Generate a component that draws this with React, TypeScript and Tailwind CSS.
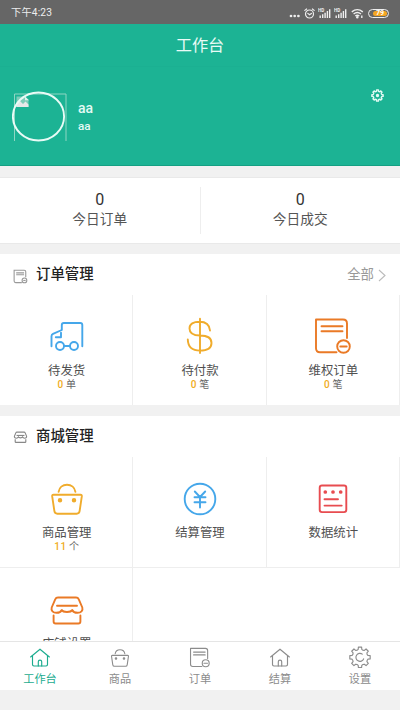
import type { ReactNode } from 'react';

type IconProps = { className?: string };

// outline of a cog with rounded teeth, centred on 12,12
function gearPath(teeth: number, outer: number, inner: number) {
  const step = (Math.PI * 2) / teeth;
  const pt = (r: number, a: number) => `${(12 + r * Math.sin(a)).toFixed(2)} ${(12 - r * Math.cos(a)).toFixed(2)}`;
  let d = '';
  for (let i = 0; i < teeth; i++) {
    const a = i * step;
    d += `${i === 0 ? 'M' : 'L'}${pt(outer, a - step * 0.2)}L${pt(outer, a + step * 0.2)}L${pt(inner, a + step * 0.28)}Q${pt(inner - 0.8, a + step * 0.5)} ${pt(inner, a + step * 0.72)}`;
  }
  return d + 'Z';
}

function BigIcon({ color, children }: { color: string; children: ReactNode }) {
  return (
    <svg className={`w-10 h-10 shrink-0 ${color}`} viewBox="0 0 40 40" fill="none" stroke="currentColor" strokeWidth="1.9" strokeLinecap="round" strokeLinejoin="round">
      {children}
    </svg>
  );
}

function DocShape() {
  return (
    <>
      <path d="M23.5 36.3H7Q3 36.3 3 32.3V3.5H30Q34 3.5 34 7.5V22" />
      <path d="M8.5 10.3H29.5M8.5 15.3H29.5" />
      <circle cx="30.5" cy="30.5" r="6.3" />
      <path d="M27.3 30.5H33.7" />
    </>
  );
}

function BagShape() {
  return (
    <>
      <path d="M6.5 16.7H33.5Q35 16.7 34.8 18.4L32.6 33.2Q32.2 35.7 29.7 35.7H10.3Q7.8 35.7 7.4 33.2L5.2 18.4Q5 16.7 6.5 16.7Z" />
      <path d="M11.6 13.8C12.2 9.7 15.6 6.8 20 6.8S27.8 9.7 28.4 13.8" />
      <circle cx="13" cy="22.2" r="1.3" fill="currentColor" />
      <circle cx="27" cy="22.2" r="1.3" fill="currentColor" />
    </>
  );
}

function ShopShape() {
  return (
    <>
      <path d="M11 8.5H29Q31 8.5 31.8 10.3L35.3 18.5C36.2 21.5 34 23.8 30.5 23.8C28 23.8 26 22.8 25.2 21C24 23.6 16 23.6 14.8 21C14 22.8 12 23.8 9.5 23.8C6 23.8 3.8 21.5 4.7 18.5L8.2 10.3Q9 8.5 11 8.5Z" />
      <path d="M10 16.8H30" />
      <path d="M6.6 26.5V32.5Q6.6 34.5 8.6 34.5H31.4Q33.4 34.5 33.4 32.5V26.5" />
    </>
  );
}

function HomeIcon({ className }: IconProps) {
  return (
    <svg className={className} viewBox="0 0 24 24" fill="none" stroke="currentColor" strokeWidth="1.15" strokeLinecap="round" strokeLinejoin="round">
      <path d="M2.6 12L12 4.2L21.4 12" />
      <path d="M4.5 10.6V19.6Q4.5 21 5.9 21H18.1Q19.5 21 19.5 19.6V10.6" />
      <path d="M10.3 21V16.8A1.7 1.7 0 0 1 13.7 16.8V21" />
    </svg>
  );
}

function NavBagIcon({ className }: IconProps) {
  return (
    <svg className={className} viewBox="-1 -1.5 42 42" fill="none" stroke="currentColor" strokeWidth="1.9" strokeLinecap="round" strokeLinejoin="round">
      <BagShape />
    </svg>
  );
}

function NavDocIcon({ className }: IconProps) {
  return (
    <svg className={className} viewBox="-1.6 -2.6 43.5 43.5" fill="none" stroke="currentColor" strokeWidth="2" strokeLinecap="round" strokeLinejoin="round">
      <DocShape />
    </svg>
  );
}

function NavGearIcon({ className }: IconProps) {
  return (
    <svg className={className} viewBox="0 -.3 24 24" fill="none" stroke="currentColor" strokeWidth="1.15" strokeLinecap="round" strokeLinejoin="round">
      <path d={gearPath(8, 10.3, 8.2)} />
      <path d="M14.3 8.8A4 4 0 1 0 15.6 13.6" />
    </svg>
  );
}

function SignalIcon() {
  return (
    <svg className="w-[13px] h-[11px]" viewBox="0 0 13 11" fill="#eee">
      <text x="0" y="4.2" fontSize="4.6" fontFamily="Roboto, sans-serif" fontWeight="700">HD</text>
      <path d="M1.5 7.5H2.9V10H1.5zM4 6.2H5.4V10H4zM6.4 4.7H7.8V10H6.4zM8.7 3H10.1V10H8.7zM11 1.3H12.4V10H11z" />
    </svg>
  );
}

function StatusBar() {
  return (
    <div className="h-6 shrink-0 bg-[#666] flex items-center justify-between pl-[11px] pr-[11px] pt-[2px] text-[#eee]">
      <span className="text-[10.2px] leading-none tracking-[.2px]">下午4:23</span>
      <div className="flex items-center gap-[3px]">
        <svg className="w-[11px] h-[11px] mr-px" viewBox="0 0 11 11" fill="currentColor">
          <circle cx="2" cy="8" r="1.35" />
          <circle cx="5.7" cy="8" r="1.35" />
          <circle cx="9.4" cy="8" r="1.35" />
        </svg>
        <svg className="w-[11px] h-[11px]" viewBox="0 0 11 11" fill="none" stroke="currentColor" strokeWidth="1.2" strokeLinecap="round">
          <circle cx="5.5" cy="6" r="4" />
          <path d="M.8 2.4L2.6 1M10.2 2.4L8.4 1M3.8 5.4L5.5 6.8L7.4 5.4" />
        </svg>
        <SignalIcon />
        <SignalIcon />
        <svg className="w-[13px] h-[11px] ml-px" viewBox="0 0 13 11" fill="none" stroke="currentColor" strokeWidth="1.4">
          <path d="M.8 3.9Q6.3 -.6 11.8 3.9M2.6 6Q6.3 3 10 6M4.3 8Q6.3 6.4 8.3 8" />
          <circle cx="6.3" cy="9.3" r=".6" fill="currentColor" />
          <path d="M10.8 7.5V10" />
        </svg>
        <div className="w-[21px] h-[9px] ml-px rounded-full border border-[#eee] p-px flex">
          <div className="w-[14px] h-[5px] ml-[3px] rounded-full bg-[#f5a623] text-[7px] leading-[5.5px] text-white font-bold text-center">79</div>
        </div>
      </div>
    </div>
  );
}

function Avatar() {
  return (
    <svg className="w-14 h-[52px]" viewBox="0 0 56 52" fill="none">
      <path d="M2.5 50V3H54V50" stroke="#8fd6c3" strokeWidth="1" />
      <path d="M4.5 5.5H13L16.5 9V16H4.5Z" fill="#7fcdb9" />
      <path d="M4.3 16V12.5L8 10L11 13L13.5 10.5L16.5 13.5V16Z" fill="#e8e8e8" />
      <path d="M13 5.5V9.2H17Z" fill="#dff3ee" />
      <ellipse cx="26.5" cy="25.5" rx="25.6" ry="24" stroke="#e9fbf6" strokeWidth="1.9" />
    </svg>
  );
}

function Stat({ value, label }: { value: string; label: string }) {
  return (
    <div className="flex-1 flex flex-col items-center pt-[13px]">
      <span className="text-[16px] leading-[18px] text-[#333]">{value}</span>
      <span className="text-[13.7px] leading-[20px] text-[#555]">{label}</span>
    </div>
  );
}

function SectionHeader({ icon, title, children }: { icon: ReactNode; title: string; children?: ReactNode }) {
  return (
    <div className="h-10 shrink-0 flex items-center pl-[13px] pr-[14px] pt-[2px]">
      {icon}
      <h2 className="ml-2 text-[14.4px] font-medium text-[#222]">{title}</h2>
      {children}
    </div>
  );
}

function Cell({ icon, label, count, unit }: { icon: ReactNode; label: string; count?: string; unit?: string }) {
  return (
    <div className="h-full flex flex-col items-center pt-[21px] pl-px border-r border-[#eee]">
      {icon}
      <span className="mt-[6px] text-[12.4px] leading-[17px] text-[#505050]">{label}</span>
      {count && (
        <span className="text-[10px] leading-[11px] text-[#666]">
          <span className="text-[#f0ac1c] font-medium tracking-[.4px]">{count}</span> {unit}
        </span>
      )}
    </div>
  );
}

const tabs = [
  { label: '工作台', Icon: HomeIcon },
  { label: '商品', Icon: NavBagIcon },
  { label: '订单', Icon: NavDocIcon },
  { label: '结算', Icon: HomeIcon },
  { label: '设置', Icon: NavGearIcon },
];

export default function App() {
  return (
    <div className="w-[400px] h-[710px] flex flex-col overflow-hidden bg-[#f1f1f1] font-[Roboto,'Noto_Sans_CJK_SC',sans-serif]">
      <StatusBar />
      <header className="h-[43px] shrink-0 bg-[#1cb394] border-b border-[#1bb092] flex items-center justify-center pt-[3px]">
        <h1 className="text-[16.2px] text-[#e9fbf6]">工作台</h1>
      </header>

      <main className="flex-1 min-h-0 overflow-hidden flex flex-col">
        <div className="h-[99px] shrink-0 bg-[#1cb394] border-b border-[#14a083] flex items-start pl-3 pr-4 pt-6 text-[#e3faf4]">
          <Avatar />
          <div className="ml-[10px] pt-[9px] flex flex-col font-medium">
            <span className="text-[14px] leading-4">aa</span>
            <span className="mt-[2px] text-[11.7px] leading-4">aa</span>
          </div>
          <svg className="ml-auto mt-[-2px] w-[13px] h-[13px]" viewBox="0 0 24 24" fill="none" stroke="currentColor" strokeWidth="2.6" strokeLinejoin="round">
            <path d={gearPath(8, 10.5, 8.2)} />
            <circle cx="12" cy="12" r="1.8" fill="currentColor" />
          </svg>
        </div>

        <div className="mt-[11px] h-[67px] shrink-0 bg-white border-y border-[#e9e9e9] flex items-stretch">
          <Stat value="0" label="今日订单" />
          <div className="w-px my-[9px] bg-[#eee]" />
          <Stat value="0" label="今日成交" />
        </div>

        <section className="mt-[10px] h-[151px] shrink-0 bg-white flex flex-col">
          <SectionHeader
            title="订单管理"
            icon={
              <svg className="w-[15px] h-[15px] mt-[2px] text-[#999]" viewBox="0 0 40 40" fill="none" stroke="currentColor" strokeWidth="2.9">
                <DocShape />
              </svg>
            }
          >
            <span className="ml-auto text-[13.4px] text-[#999]">全部</span>
            <svg className="ml-1 w-2 h-[13px] text-[#bbb]" viewBox="0 0 8 13" fill="none" stroke="currentColor" strokeWidth="1.1">
              <path d="M1 1L7 6.5L1 12" />
            </svg>
          </SectionHeader>
          <div className="mt-px flex-1 grid grid-cols-3">
            <Cell
              label="待发货"
              count="0"
              unit="单"
              icon={
                <BigIcon color="text-[#45a7ea]">
                  <path d="M4.5 30.3V20.3Q4.5 18.6 6 17.9L14.8 14V9Q14.8 7 16.8 7H33.3Q35.3 7 35.3 9V30.3" />
                  <path d="M14 16.8V21.3H8.8" />
                  <circle cx="13" cy="30" r="4" />
                  <circle cx="27" cy="30" r="4" />
                  <path d="M17 30H23" />
                </BigIcon>
              }
            />
            <Cell
              label="待付款"
              count="0"
              unit="笔"
              icon={
                <BigIcon color="text-[#f0ac2c]">
                  <path d="M30 14.5C29.5 8.5 25.5 5.7 19.5 5.7C13.5 5.7 9.5 8 9.5 12.5C9.5 17 13 19.5 20 19.5C27.5 19.5 31.5 22 31.5 27C31.5 32 27 34.6 20 34.6C12 34.6 8 31 7.8 23.5M20 2.7V37" />
                </BigIcon>
              }
            />
            <Cell label="维权订单" count="0" unit="笔" icon={<BigIcon color="text-[#ea7a26]"><DocShape /></BigIcon>} />
          </div>
        </section>

        <section className="mt-[11px] shrink-0 bg-white flex flex-col">
          <SectionHeader
            title="商城管理"
            icon={
              <svg className="w-[15px] h-[15px] text-[#888]" viewBox="1 3 38 38" fill="none" stroke="currentColor" strokeWidth="2.9">
                <ShopShape />
              </svg>
            }
          />
          <div className="mt-px grid grid-cols-3 auto-rows-[111px]">
            <div className="border-b border-[#eee]">
              <Cell label="商品管理" count="11" unit="个" icon={<BigIcon color="text-[#f0ac2c]"><BagShape /></BigIcon>} />
            </div>
            <div className="border-b border-[#eee]">
              <Cell
                label="结算管理"
                icon={
                  <BigIcon color="text-[#45a7ea]">
                    <circle cx="20" cy="21" r="15.3" />
                    <path d="M14.8 13.5L20 19L25.2 13.5M14.5 19.3H25.5M14.5 24.3H25.5M20 19V29.5" />
                  </BigIcon>
                }
              />
            </div>
            <div className="border-b border-[#eee]">
              <Cell
                label="数据统计"
                icon={
                  <BigIcon color="text-[#e84c50]">
                    <rect x="6.7" y="7.5" width="26.6" height="26.6" rx="2.3" />
                    <path d="M11.5 21.2H25M11.5 27.6H28.7" />
                    <circle cx="12.3" cy="14" r=".9" fill="currentColor" />
                    <circle cx="20" cy="14" r=".9" fill="currentColor" />
                    <circle cx="27.7" cy="14" r=".9" fill="currentColor" />
                  </BigIcon>
                }
              />
            </div>
            <Cell label="店铺设置" icon={<BigIcon color="text-[#ea7a26]"><ShopShape /></BigIcon>} />
          </div>
        </section>
      </main>

      <nav className="h-[49px] shrink-0 bg-white border-t border-[#e5e5e5] grid grid-cols-5">
        {tabs.map(({ label, Icon }, i) => (
          <div key={label} className={`flex flex-col items-center pt-[3px] ${i === 0 ? 'text-[#1cac8f]' : 'text-[#8c8c8c]'}`}>
            <Icon className="w-6 h-6" />
            <span className="mt-[2px] text-[11.2px] leading-[17px]">{label}</span>
          </div>
        ))}
      </nav>
      <div className="h-5 shrink-0" />
    </div>
  );
}
